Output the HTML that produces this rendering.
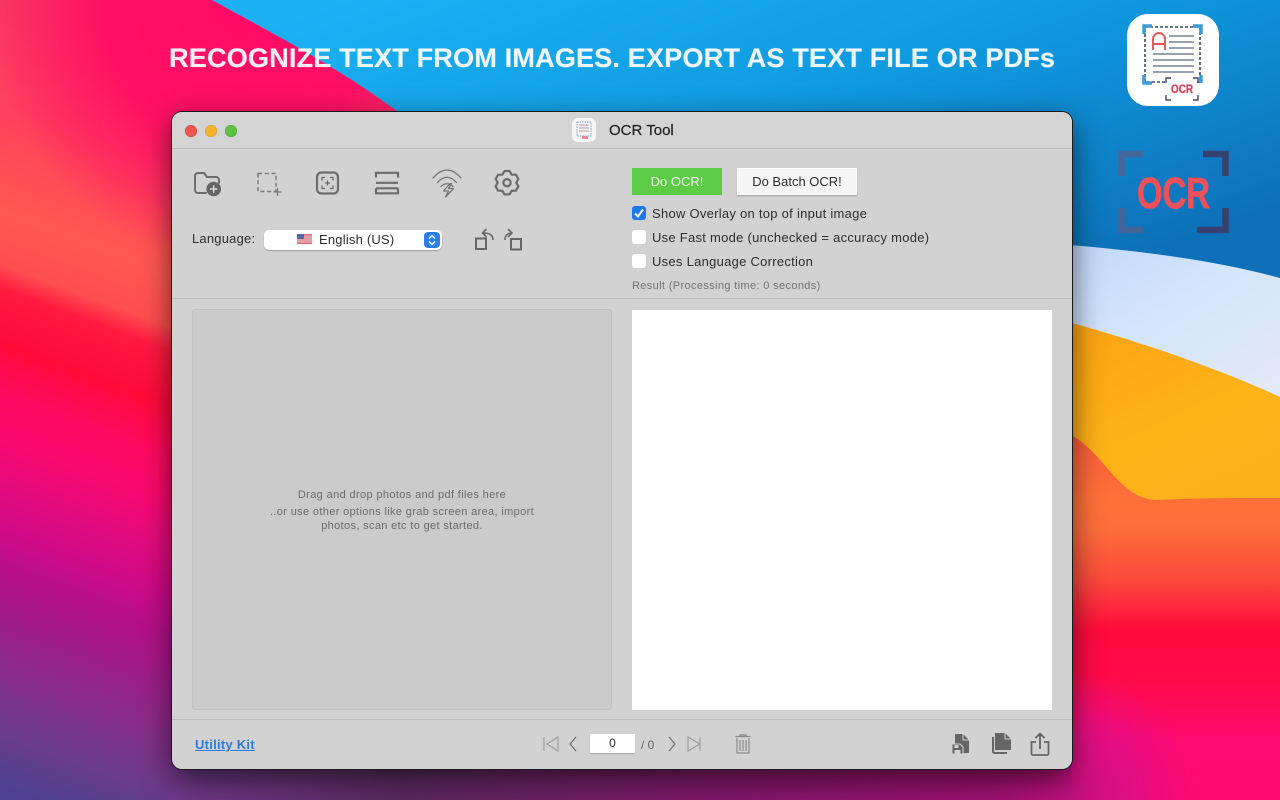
<!DOCTYPE html>
<html><head><meta charset="utf-8"><style>
html,body{margin:0;padding:0;width:1280px;height:800px;overflow:hidden;font-family:"Liberation Sans",sans-serif}
.a{position:absolute}
#win{left:172px;top:112px;width:900px;height:657px;background:#d2d2d2;border-radius:10px;overflow:hidden}
#sh{left:172px;top:112px;width:900px;height:657px;border-radius:10px;box-shadow:0 0 0 1px #1a1a1a,0 10px 30px rgba(0,0,0,.6)}
.t{position:absolute;white-space:nowrap;color:#2e2e2e;font-size:13px;line-height:16px}
.dot{position:absolute;top:13px;width:12px;height:12px;border-radius:50%}
.cb{position:absolute;left:460px;width:14px;height:14px;border-radius:3px;background:#fff}
svg{position:absolute;overflow:visible}
</style></head><body>
<svg class="a" style="left:0;top:0" width="1280" height="800" viewBox="0 0 1280 800">
<defs>
<linearGradient id="r" gradientUnits="userSpaceOnUse" x1="0" y1="0" x2="-260" y2="704">
<stop offset="0" stop-color="#f83a62"/><stop offset=".125" stop-color="#ff3f5e"/><stop offset=".265" stop-color="#ff5850"/><stop offset=".33" stop-color="#fe4e50"/><stop offset=".36" stop-color="#ff1a40"/><stop offset=".43" stop-color="#ff0a3a"/><stop offset=".49" stop-color="#ff0a60"/><stop offset=".55" stop-color="#f80a70"/><stop offset=".66" stop-color="#d00a88"/><stop offset=".72" stop-color="#b31089"/><stop offset=".83" stop-color="#8b2a88"/><stop offset=".91" stop-color="#6b3b88"/><stop offset=".975" stop-color="#524090"/><stop offset="1" stop-color="#4c4092"/></linearGradient>
<radialGradient id="p" gradientUnits="userSpaceOnUse" cx="240" cy="10" r="250"><stop offset="0" stop-color="#ff0a64"/><stop offset=".55" stop-color="#ff0a64" stop-opacity=".85"/><stop offset="1" stop-color="#ff0a64" stop-opacity="0"/></radialGradient>
<linearGradient id="b" x1="0.1" y1="0" x2="1" y2="0.7"><stop offset="0" stop-color="#1cb2f2"/><stop offset=".5" stop-color="#0f9ae0"/><stop offset="1" stop-color="#0d70b8"/></linearGradient>
<linearGradient id="w" x1="0" y1="0" x2="1" y2="1"><stop offset="0" stop-color="#b7d2f8"/><stop offset=".5" stop-color="#d4e6fb"/><stop offset="1" stop-color="#e6eaf8"/></linearGradient>
<linearGradient id="o" x1="0" y1="0" x2="0.6" y2="1"><stop offset="0" stop-color="#fb9c12"/><stop offset=".7" stop-color="#fdb318"/><stop offset="1" stop-color="#fdb01c"/></linearGradient>
<linearGradient id="d" gradientUnits="userSpaceOnUse" x1="0" y1="425" x2="0" y2="800"><stop offset="0" stop-color="#fa5a3a"/><stop offset=".2" stop-color="#ff7038"/><stop offset=".28" stop-color="#fd6c3a"/><stop offset=".41" stop-color="#fb4a3c"/><stop offset=".55" stop-color="#ff0a3c"/><stop offset=".68" stop-color="#ff0a48"/><stop offset=".84" stop-color="#ff0a70"/><stop offset="1" stop-color="#ff0a6e"/></linearGradient>
<linearGradient id="bot" gradientUnits="userSpaceOnUse" x1="172" y1="0" x2="1072" y2="0"><stop offset="0" stop-color="#70388a"/><stop offset=".25" stop-color="#5a2a60"/><stop offset=".6" stop-color="#80186a"/><stop offset=".92" stop-color="#a0106f"/><stop offset="1" stop-color="#c0107e"/></linearGradient>
<radialGradient id="mg" gradientUnits="userSpaceOnUse" cx="1072" cy="800" r="130"><stop offset="0" stop-color="#c0107e"/><stop offset=".45" stop-color="#d80f88" stop-opacity=".8"/><stop offset="1" stop-color="#e0108a" stop-opacity="0"/></radialGradient>
</defs>
<rect width="1280" height="800" fill="url(#r)"/>
<rect width="520" height="270" fill="url(#p)"/>
<path d="M212 0C270 32 340 68 398 112L1280 300V0Z" fill="url(#b)"/>
<path d="M1000 240C1100 246 1200 256 1280 278V420H1000Z" fill="url(#w)"/>
<path d="M1000 305C1090 325 1200 360 1280 397V520H1000Z" fill="url(#o)"/>
<path d="M1000 425L1073 436C1105 455 1120 498 1155 500C1200 498 1240 498 1280 498V800H1000Z" fill="url(#d)"/>
<rect x="1072" y="670" width="130" height="130" fill="url(#mg)"/>
<rect x="172" y="760" width="900" height="40" fill="url(#bot)"/>
</svg>
<div class="a" style="left:169px;top:42px;font-size:27.2px;line-height:32px;font-weight:bold;color:#fff;white-space:nowrap;opacity:.93;letter-spacing:.09px;text-shadow:0 0 1px rgba(255,255,255,.5)">RECOGNIZE TEXT FROM IMAGES. EXPORT AS TEXT FILE OR PDFs</div>

<div class="a" style="left:1127px;top:14px;width:92px;height:92px;border-radius:21px;background:#fff"></div>
<svg class="a" style="left:1127px;top:14px" width="92" height="92" fill="none">
<rect x="18" y="13" width="55" height="55" stroke="#3b4a70" stroke-width="1.600" stroke-dasharray="3 2"/>
<path d="M17 20v-8h8M66 12h8v8M17 61v8h8M74 61v8" stroke="#3d9bd6" stroke-width="3.500"/>
<path d="M26 36V25a6 6 0 0 1 12 0v11M26 30h12" stroke="#e25757" stroke-width="1.900"/>
<path d="M42 22h25M42 28h25M42 34h25M26 40h41M26 46h41M26 52h41M26 58h41" stroke="#9aa2ab" stroke-width="1.900"/>
<rect x="40" y="64" width="30" height="22" fill="#fff"/>
<path d="M39 69v-5h5M66 64h5v5M39 81v5h5M66 86h5v-5" stroke="#3b4a70" stroke-width="1.400"/>
<text x="44" y="79" font-family="Liberation Sans" font-weight="bold" font-size="11.500" fill="#d6405c" stroke="#d6405c" stroke-width=".3" textLength="22" lengthAdjust="spacingAndGlyphs">OCR</text>
</svg>

<svg class="a" style="left:1118px;top:150px" width="112" height="85" fill="none">
<path d="M25 4H3.500V26M3.500 58V80H25" stroke="#4f6290" stroke-width="6.500" opacity=".85"/>
<path d="M85 4H107.500V26M107.500 58V80H79" stroke="#37406f" stroke-width="6.500"/>
<text x="19" y="58" font-family="Liberation Sans" font-weight="bold" font-size="44" fill="#ef5059" stroke="#ef5059" stroke-width=".8" textLength="73" lengthAdjust="spacingAndGlyphs">OCR</text>
</svg>

<div class="a" id="sh"></div>
<div class="a" id="win">
<div class="a" style="left:0;top:0;width:900px;height:36px;background:#d4d4d4;border-bottom:1px solid #bcbcbc"></div>
<div class="dot" style="left:13px;background:#ee5550;box-shadow:inset 0 0 0 .5px #c94540"></div>
<div class="dot" style="left:33px;background:#f4b32e;box-shadow:inset 0 0 0 .5px #cf9826"></div>
<div class="dot" style="left:53px;background:#5cc040;box-shadow:inset 0 0 0 .5px #4ca236"></div>
<div class="a" style="left:400px;top:6px;width:24px;height:24px;border-radius:6px;background:#f4f4f4"></div>
<svg style="left:400px;top:6px" width="24" height="24" fill="none"><rect x="5" y="4" width="14" height="14" stroke="#7aa6c8" stroke-width="1" stroke-dasharray="1.500 1"/><path d="M7 7h10M7 10h10M7 13h10" stroke="#c9a6b4" stroke-width="1.300"/><rect x="10" y="18" width="6" height="3" fill="#e58a9c"/></svg>
<div class="t" style="left:437px;top:10px;font-size:15px;line-height:18px;color:#222;-webkit-text-stroke:.2px #222">OCR Tool</div>

<svg style="left:0;top:36px" width="400" height="120" fill="none" stroke="#6c6c6c" stroke-width="2" stroke-linejoin="round" stroke-linecap="round">
<path d="M34 45H26a3 3 0 0 1-3-3V28a3 3 0 0 1 3-3h6l3 4h9a3 3 0 0 1 3 3v3"/>
<circle cx="41.700" cy="41" r="7.300" fill="#666" stroke="none"/><path d="M38 41h7.400M41.700 37.300v7.400" stroke="#ddd" stroke-width="1.400" stroke-linecap="butt"/>
<path d="M86 25.500h18v18H86z" stroke="#7a7a7a" stroke-dasharray="4 2.800" stroke-width="1.500" stroke-linecap="butt"/><path d="M102 44h7M105.500 40.500v7" stroke="#7a7a7a" stroke-width="1.300"/>
<rect x="145" y="24.500" width="21" height="21" rx="4.500" stroke-width="2.200"/><path d="M150 32v-2.500h2.500M161 32v-2.500h-2.500M150 38v2.500h2.500M161 38v2.500h-2.500M153.500 35h4M155.500 33v4" stroke-width="1.300"/>
<path d="M204 29.500V24.800h22v4.700M204 34.800h22M204 40.300h22M204 40.300v5h22v-5" stroke-width="2.200" stroke-linecap="butt" stroke-linejoin="miter"/>
<path d="M261 30Q275 14 289 30M265.500 34.500Q275 24 284.500 34.500M269 38.500Q275 33 281 38.500" stroke="#777" stroke-width="1.300"/><path d="M278 35.500l-6.500 7.500h5l-3 6 8-8.500h-5l3-5z" stroke="#777" stroke-width="1.300"/>
<polygon points="332.500,23 337.500,23 339.650,26.650 343.900,26.700 346.400,31 344.300,34.700 346.400,38.400 343.900,42.700 339.650,42.750 337.500,46.400 332.500,46.400 330.350,42.750 326.100,42.700 323.600,38.400 325.700,34.700 323.600,31 326.100,26.700 330.350,26.650" stroke-width="2.200"/><circle cx="335" cy="34.700" r="3.600" stroke-width="2.200"/>
</svg>

<div class="t" style="left:20px;top:119px;letter-spacing:.2px">Language:</div>
<div class="a" style="left:92px;top:118px;width:178px;height:20px;background:#fff;border-radius:5px;box-shadow:0 1px 1px rgba(0,0,0,.25)"></div>
<svg style="left:125px;top:121px" width="16" height="12"><rect width="15" height="10" y="1" fill="#d9646c"/><path d="M0 3h15M0 5h15M0 7h15M0 9h15" stroke="#f0d9da" stroke-width="1"/><rect y="1" width="7" height="5" fill="#4f6aa8"/></svg>
<div class="t" style="left:147px;top:120px;letter-spacing:.2px">English (US)</div>
<div class="a" style="left:252px;top:120px;width:16px;height:16px;border-radius:4px;background:#2a7fe8"></div>
<svg style="left:252px;top:120px" width="16" height="16" fill="none" stroke="#fff" stroke-width="1.300"><path d="M5 6.500l3-3 3 3M5 9.500l3 3 3-3"/></svg>
<svg style="left:300px;top:114px" width="60" height="28" fill="none" stroke="#666" stroke-width="2">
<rect x="4" y="12.500" width="10" height="10.500"/><path d="M21 14C21 9 18 7 11 7M14.500 3L10.500 7l4 4" stroke-width="1.600"/>
<rect x="39" y="13" width="10" height="10.500"/><path d="M33 14C33 9 36 7 40 7M36 3l4 4-4 4" stroke-width="1.600"/>
</svg>

<div class="a" style="left:460px;top:56px;width:90px;height:27px;background:#5ccb45"></div>
<div class="t" style="left:460px;top:62px;width:90px;text-align:center;color:#f0f6ea">Do OCR!</div>
<div class="a" style="left:565px;top:56px;width:118px;height:25px;background:#f5f5f5;border:1px solid #fff;box-shadow:0 1px 1px rgba(0,0,0,.25)"></div>
<div class="t" style="left:565px;top:62px;width:120px;text-align:center">Do Batch OCR!</div>

<div class="cb" style="top:94px;background:#1d78e8"></div>
<svg style="left:460px;top:94px" width="14" height="14" fill="none" stroke="#fff" stroke-width="2"><path d="M3 7.500l3 3 5-7"/></svg>
<div class="t" style="left:480px;top:94px;letter-spacing:.27px">Show Overlay on top of input image</div>
<div class="cb" style="top:118px"></div>
<div class="t" style="left:480px;top:118px;letter-spacing:.27px">Use Fast mode (unchecked = accuracy mode)</div>
<div class="cb" style="top:142px"></div>
<div class="t" style="left:480px;top:142px;letter-spacing:.27px">Uses Language Correction</div>
<div class="t" style="left:460px;top:166px;font-size:11px;color:#737373;letter-spacing:.36px">Result (Processing time: 0 seconds)</div>

<div class="a" style="left:0;top:186px;width:900px;height:1px;background:#bcbcbc"></div>
<div class="a" style="left:20px;top:197px;width:418px;height:399px;background:#cbcbcb;border:1px solid #c2c2c2;border-radius:3px"></div>
<div class="t" style="left:20px;top:376px;width:420px;text-align:center;font-size:11px;line-height:15px;color:#6a6a6a;letter-spacing:.37px">Drag and drop photos and pdf files here</div>
<div class="t" style="left:20px;top:393px;width:420px;text-align:center;font-size:11px;line-height:14px;color:#6a6a6a;letter-spacing:.35px;white-space:normal"><div style="width:300px;margin:0 auto">..or use other options like grab screen area, import photos, scan etc to get started.</div></div>
<div class="a" style="left:460px;top:198px;width:420px;height:400px;background:#fff"></div>

<div class="a" style="left:0;top:607px;width:900px;height:1px;background:#bcbcbc"></div>
<div class="t" style="left:23px;top:625px;font-weight:bold;color:#2a7be0;text-decoration:underline;letter-spacing:.25px">Utility Kit</div>
<svg style="left:360px;top:620px" width="240" height="24" fill="none" stroke-width="1.100">
<path d="M12 5v14M26 5L15 12l11 7zM156 5l12 7-12 7zM168 5v14" stroke="#9a9a9a"/>
<path d="M44 5l-6 7 6 7M137 5l6 7-6 7" stroke="#6e6e6e" stroke-width="1.200"/>
</svg>
<div class="a" style="left:418px;top:622px;width:45px;height:19px;background:#fff;box-shadow:0 1px 1px rgba(0,0,0,.2)"></div>
<div class="t" style="left:418px;top:623px;width:45px;text-align:center;font-size:12px">0</div>
<div class="t" style="left:469px;top:625px;font-size:12px;color:#666">/ 0</div>
<svg style="left:560px;top:620px" width="24" height="24" fill="none" stroke="#8a8a8a" stroke-width="1.200"><path d="M3.500 4.500h15M8 4.500V3h6v1.500M5 6v15h12V6M8 8v11M11 8v11M14 8v11"/></svg>
<svg style="left:770px;top:618px" width="120" height="28" fill="#666">
<path d="M13 4h8l6 6v13H13z"/>
<path d="M21 4v6h6" fill="none" stroke="#d2d2d2" stroke-width="1"/>
<path d="M10 14h8l3 3v7H10z" stroke="#d2d2d2" stroke-width="1"/><rect x="12.500" y="15" width="4" height="3" fill="#d2d2d2"/><rect x="12.500" y="20" width="6" height="4" fill="#d2d2d2"/>
<path d="M53 3h10l6 6v11H53z"/>
<path d="M63 3v6h6" fill="none" stroke="#d2d2d2" stroke-width="1"/>
<path d="M51 7v14.500a1.500 1.500 0 0 0 1.500 1.500H65" fill="none" stroke="#666" stroke-width="2"/>
<path d="M98 4v15M93.500 8L98 3.500l4.500 4.500" fill="none" stroke="#666" stroke-width="1.800"/>
<path d="M94 12h-4.500v11.500a1.500 1.500 0 0 0 1.500 1.500h14a1.500 1.500 0 0 0 1.500-1.500V12H102" fill="none" stroke="#666" stroke-width="1.800"/>
</svg>
</div>
</body></html>
